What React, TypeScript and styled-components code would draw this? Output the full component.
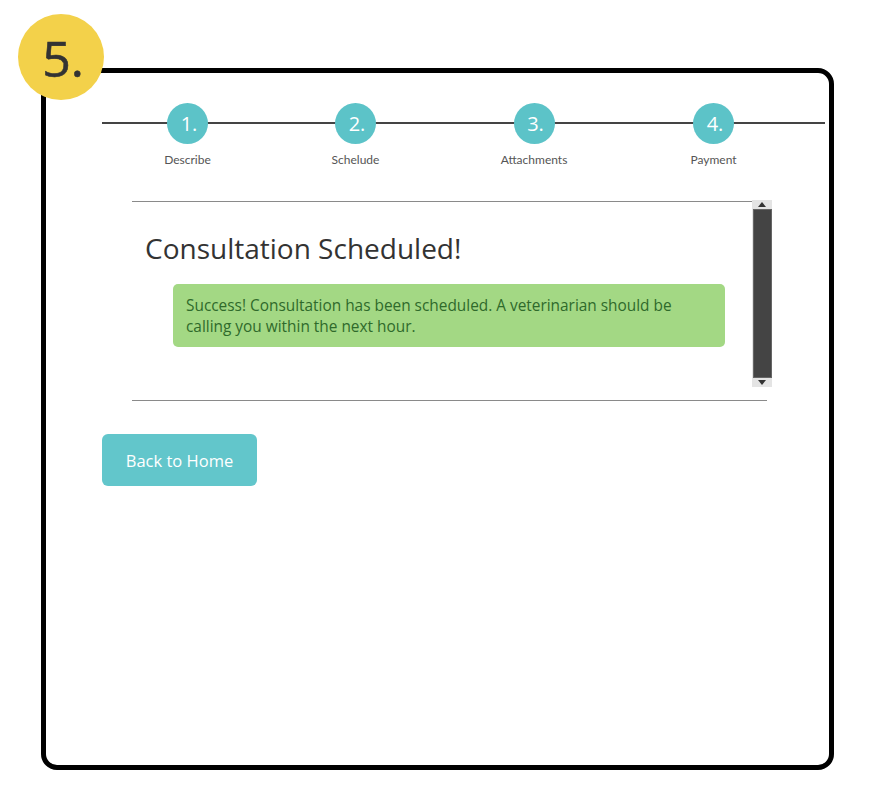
import React from "react";
import styled, { createGlobalStyle } from "styled-components";

const Global = createGlobalStyle`
  html, body { margin: 0; padding: 0; background: #fff; }
  body { font-family: "Open Sans", "Noto Sans", sans-serif; }
`;

const Page = styled.div`
  width: 875px;
  height: 785px;
  box-sizing: border-box;
  padding: 68px 0 0 41px;
  overflow: hidden;
`;

const Frame = styled.div`
  position: relative;
  width: 793px;
  height: 702px;
  box-sizing: border-box;
  border: 5px solid #000;
  border-radius: 16px;
  padding-top: 30px;
`;

const Badge = styled.div`
  position: absolute;
  left: -28px;
  top: -59px;
  width: 86px;
  height: 86px;
  border-radius: 50%;
  background: #f3d14a;
  display: flex;
  align-items: center;
  justify-content: center;
  font-family: "Open Sans", sans-serif;
  font-weight: 400;
  font-size: 50px;
  line-height: 1;
  color: #333;
  -webkit-text-stroke: 0.6px #333;
  padding: 2px 0 0 4px;
  box-sizing: border-box;
`;

const Stepper = styled.div`
  position: relative;
  margin-left: 56px;
  width: 723px;
  display: grid;
  grid-template-columns: 171px 165px 192px 167px;
  &::before {
    content: "";
    position: absolute;
    left: 0;
    right: 0;
    top: 19px;
    height: 2px;
    background: #444;
  }
`;

const Step = styled.div`
  position: relative;
  display: flex;
  flex-direction: column;
  align-items: center;
`;

const Circle = styled.div`
  width: 41px;
  height: 41px;
  border-radius: 50%;
  background: #5cc3c8;
  color: #fff;
  font-size: 20px;
  display: flex;
  align-items: center;
  justify-content: center;
  padding-left: 3px;
  box-sizing: border-box;
`;

const StepLabel = styled.div`
  margin-top: 8px;
  font-family: "Lato", sans-serif;
  font-size: 12px;
  color: #555;
`;

const Panel = styled.div`
  margin-left: 86px;
  margin-top: 34px;
  width: 640px;
`;

const ScrollRow = styled.div`
  display: flex;
`;

const Content = styled.div`
  width: 620px;
  height: 186px;
  border-top: 1px solid #8a8a8a;
  box-sizing: border-box;
  padding-top: 28px;
`;

const Heading = styled.h1`
  margin: 0 0 0 13px;
  font-weight: 400;
  font-size: 28px;
  line-height: 36px;
  color: #333;
`;

const Alert = styled.div`
  margin: 18px 0 0 41px;
  width: 552px;
  height: 63px;
  box-sizing: border-box;
  padding: 11px 13px 10px;
  border-radius: 5px;
  background: #a3d884;
  color: #2f6a2b;
  font-size: 15.4px;
  line-height: 21px;
`;

const Scrollbar = styled.div`
  width: 20px;
  height: 187px;
  margin-top: -1px;
  background: #e4e4e4;
  display: flex;
  flex-direction: column;
  align-items: center;
`;

const Arrow = styled.div`
  height: 9px;
  width: 20px;
  display: flex;
  align-items: center;
  justify-content: center;
`;

const Thumb = styled.div`
  flex: 1;
  width: 19px;
  box-sizing: border-box;
  border: 1px solid #666;
  background: #444;
`;

const Rule = styled.div`
  width: 635px;
  margin-top: 13px;
  border-top: 1px solid #8a8a8a;
`;

const HomeButton = styled.button`
  margin: 33px 0 0 56px;
  width: 155px;
  height: 52px;
  border: none;
  border-radius: 6px;
  background: #62c6cb;
  color: #fff;
  font-family: "Open Sans", sans-serif;
  font-size: 16.5px;
  cursor: pointer;
  display: block;
`;

const steps = [
  { n: "1.", label: "Describe" },
  { n: "2.", label: "Schelude" },
  { n: "3.", label: "Attachments" },
  { n: "4.", label: "Payment" },
];

export default function App() {
  return (
    <>
      <Global />
      <Page>
        <Frame>
          <Badge>5.</Badge>
          <Stepper>
            {steps.map((s) => (
              <Step key={s.n}>
                <Circle>{s.n}</Circle>
                <StepLabel>{s.label}</StepLabel>
              </Step>
            ))}
          </Stepper>
          <Panel>
            <ScrollRow>
              <Content>
                <Heading>Consultation Scheduled!</Heading>
                <Alert>
                  Success! Consultation has been scheduled. A veterinarian should be
                  calling you within the next hour.
                </Alert>
              </Content>
              <Scrollbar>
                <Arrow>
                  <svg width="8" height="5" viewBox="0 0 8 5">
                    <path d="M0 5 L4 0 L8 5 Z" fill="#333" />
                  </svg>
                </Arrow>
                <Thumb />
                <Arrow>
                  <svg width="8" height="5" viewBox="0 0 8 5">
                    <path d="M0 0 L4 5 L8 0 Z" fill="#333" />
                  </svg>
                </Arrow>
              </Scrollbar>
            </ScrollRow>
            <Rule />
          </Panel>
          <HomeButton>Back to Home</HomeButton>
        </Frame>
      </Page>
    </>
  );
}
